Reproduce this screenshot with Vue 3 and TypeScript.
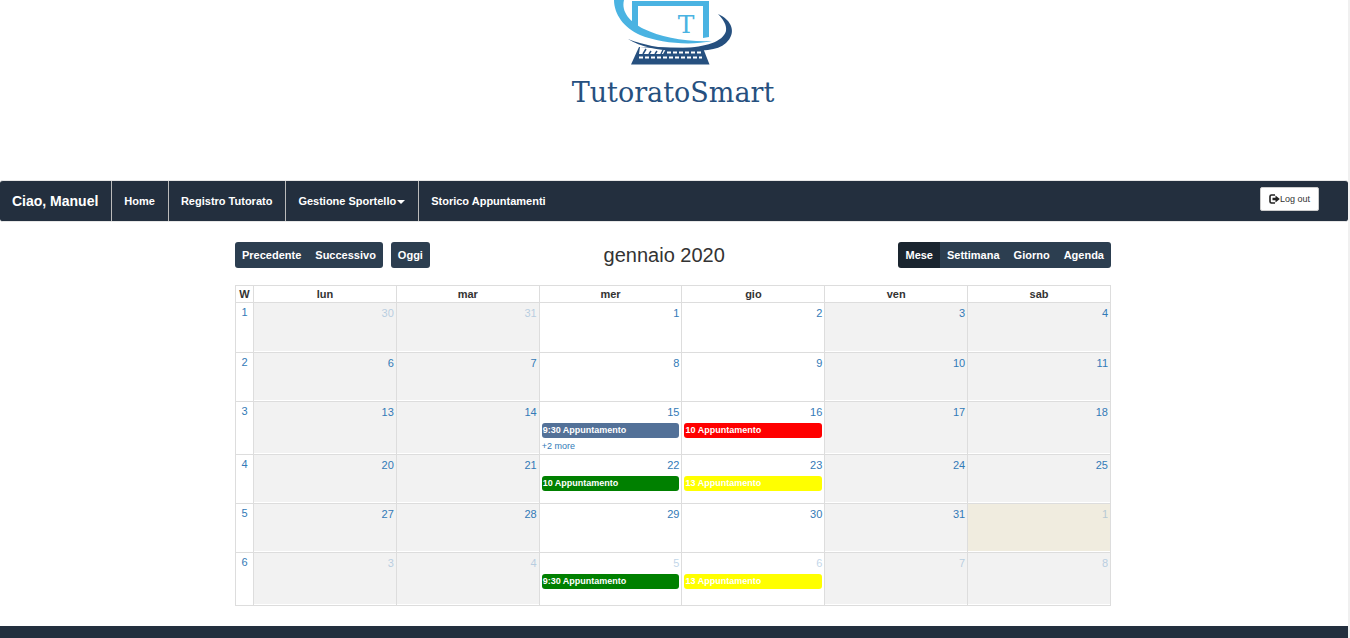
<script setup lang="ts">
import { ref } from 'vue'

interface Appointment {
  time: string
  title: string
  tone: 'slate' | 'red' | 'green' | 'yellow'
}

interface Day {
  label: number
  shaded?: boolean
  other?: boolean
  today?: boolean
  more?: number
  events?: Appointment[]
}

interface Week {
  number: number
  size: 'first' | 'short' | 'tall'
  days: Day[]
}

const weekdays = ['lun', 'mar', 'mer', 'gio', 'ven', 'sab']
const views = ['Mese', 'Settimana', 'Giorno', 'Agenda']
const activeView = ref('Mese')

const appointment = (time: string, tone: Appointment['tone']): Appointment => ({
  time,
  title: 'Appuntamento',
  tone,
})

const bookings: Record<string, Partial<Day>> = {
  '3-15': { events: [appointment('9:30', 'slate')], more: 2 },
  '3-16': { events: [appointment('10', 'red')] },
  '4-22': { events: [appointment('10', 'green')] },
  '4-23': { events: [appointment('13', 'yellow')] },
  '6-5': { events: [appointment('9:30', 'green')] },
  '6-6': { events: [appointment('13', 'yellow')] },
}

const grid = [
  [30, 31, 1, 2, 3, 4],
  [6, 7, 8, 9, 10, 11],
  [13, 14, 15, 16, 17, 18],
  [20, 21, 22, 23, 24, 25],
  [27, 28, 29, 30, 31, 1],
  [3, 4, 5, 6, 7, 8],
]

const sizes: Week['size'][] = ['first', 'short', 'tall', 'short', 'short', 'tall']

const weeks: Week[] = grid.map((labels, row) => ({
  number: row + 1,
  size: sizes[row],
  days: labels.map((label, col) => ({
    label,
    shaded: col !== 2 && col !== 3,
    other: (row === 0 && label > 20) || (row >= 4 && label < 20),
    today: row === 4 && col === 5,
    ...bookings[`${row + 1}-${label}`],
  })),
}))
</script>

<template>
  <div class="page">
    <header class="brand">
      <svg class="logo" viewBox="-1 0 230 120" role="img" aria-label="TutoratoSmart">
        <path d="M72 1H149V37L143 38V6H78V31L72 27Z" fill="#4ab3e2" />
        <path
          d="M54 0C54 14 64 28 80 35C100 43 130 46 152 41C125 42 100 37 84 29C70 22 61 12 64 0Z"
          fill="#4ab3e2"
        />
        <path d="M79 47L71 64.500H149.500L143 48Z" fill="#26507f" />
        <path d="M80 47L79 54H103L106 49Z" fill="#fff" />
        <path d="M83 54L86 49M89 54L91 51M95 54L97 51M101 54L103 50" stroke="#26507f" stroke-width="1.500" />
        <path
          d="M158 14C172 20 177 33 166 43C157 51 142 51 120 51C100 51 80 47 68 39C86 46 105 49 123 48C145 47 163 42 166 31C167 25 163 19 158 14Z"
          fill="#26507f"
        />
        <path d="M107 52.500H141" stroke="#fff" stroke-width="2" stroke-dasharray="4 2" />
        <path d="M79 57.500H142" stroke="#fff" stroke-width="2" stroke-dasharray="4 2" />
        <text x="126" y="33" text-anchor="middle" class="logo-letter">T</text>
        <text x="113" y="102" text-anchor="middle" class="logo-name">TutoratoSmart</text>
      </svg>
    </header>

    <nav class="navbar">
      <a class="user" href="#">Ciao, Manuel</a>
      <a href="#">Home</a>
      <a href="#">Registro Tutorato</a>
      <a href="#">Gestione Sportello<span class="caret"></span></a>
      <a href="#">Storico Appuntamenti</a>
      <button class="logout" type="button">
        <svg viewBox="0 0 11 10" aria-hidden="true">
          <path d="M6 1H2.500Q1 1 1 2.500V7.500Q1 9 2.500 9H6" fill="none" stroke="#222" stroke-width="1.600" />
          <path d="M3.500 3.700H6.500V1.500L10.800 5L6.500 8.500V6.300H3.500Z" fill="#222" />
        </svg>Log out
      </button>
    </nav>

    <main class="calendar">
      <div class="toolbar">
        <div class="side">
          <div class="group">
            <button type="button">Precedente</button>
            <button type="button">Successivo</button>
          </div>
          <div class="group">
            <button type="button">Oggi</button>
          </div>
        </div>
        <h2>gennaio 2020</h2>
        <div class="group">
          <button
            v-for="view in views"
            :key="view"
            type="button"
            :class="{ active: view === activeView }"
            @click="activeView = view"
          >
            {{ view }}
          </button>
        </div>
      </div>

      <table>
        <thead>
          <tr>
            <th class="week">W</th>
            <th v-for="name in weekdays" :key="name">{{ name }}</th>
          </tr>
        </thead>
        <tbody>
          <tr v-for="week in weeks" :key="week.number" :class="week.size">
            <td class="week"><a href="#">{{ week.number }}</a></td>
            <td
              v-for="(day, index) in week.days"
              :key="index"
              :class="{ shaded: day.shaded, other: day.other, today: day.today }"
            >
              <a class="date" href="#">{{ day.label }}</a>
              <a v-for="event in day.events" :key="event.time" class="event" :class="event.tone" href="#">
                {{ event.time }} {{ event.title }}
              </a>
              <a v-if="day.more" class="more" href="#">+{{ day.more }} more</a>
            </td>
          </tr>
        </tbody>
      </table>
    </main>

    <footer></footer>
  </div>
</template>

<style>
body {
  background: #fff;
  overflow: hidden;
}
</style>

<style scoped>
.page {
  box-sizing: border-box;
  min-height: 100vh;
  display: flex;
  flex-direction: column;
  border-right: 2px solid #f0f0f0;
  font-family: 'Liberation Sans', Arial, sans-serif;
  font-size: 11px;
  line-height: 16px;
  color: #333;
}

a {
  color: #337ab7;
  text-decoration: none;
}

button {
  font-family: inherit;
  cursor: pointer;
}

.brand {
  display: flex;
  justify-content: center;
  padding-bottom: 60px;
}

.logo {
  display: block;
  width: 230px;
  height: 120px;
}

.logo-letter {
  font-family: 'DejaVu Serif', serif;
  font-size: 25px;
  fill: #4ab3e2;
}

.logo-name {
  font-family: 'DejaVu Serif', serif;
  font-size: 27px;
  fill: #26507f;
}

.navbar {
  display: flex;
  align-items: stretch;
  height: 40px;
  border: solid #e7e7e7;
  border-width: 1px 0;
  border-radius: 3px;
  background: #232f3e;
}

.navbar a {
  display: flex;
  align-items: center;
  padding: 0 13px 0 12px;
  color: #fff;
  font-weight: bold;
}

.navbar a + a {
  border-left: 1px solid #bbb;
}

.navbar .user {
  font-size: 14px;
}

.caret {
  margin: 2px 0 0 1px;
  border: 4px solid transparent;
  border-top-color: #fff;
  border-bottom: 0;
}

.logout {
  display: flex;
  align-items: center;
  align-self: flex-start;
  height: 24px;
  margin: 6px 29px 0 auto;
  padding: 0 8px;
  border: 1px solid #ccc;
  border-radius: 2px;
  background: #fff;
  color: #333;
  font-size: 9px;
}

.logout svg {
  width: 11px;
  height: 10px;
}

.calendar {
  padding: 20px 237px 20px 235px;
}

.toolbar {
  display: flex;
  align-items: center;
  justify-content: space-between;
  margin-bottom: 17px;
}

.side {
  display: flex;
  gap: 8px;
}

.group {
  display: flex;
  border-radius: 3px;
  overflow: hidden;
}

.group button {
  height: 26px;
  padding: 0 7px;
  border: 0;
  background: #2c3e50;
  color: #fff;
  font-size: 11px;
  font-weight: bold;
}

.group button.active {
  background: #1a252f;
}

h2 {
  margin: 0;
  font-size: 20px;
  line-height: 26px;
  font-weight: normal;
}

table {
  width: 100%;
  table-layout: fixed;
  border-spacing: 0;
  border: solid #ddd;
  border-width: 0 1px 1px 0;
}

th,
td {
  box-sizing: border-box;
  padding: 0;
  border: solid #ddd;
  border-width: 1px 0 0 1px;
}

th {
  height: 17px;
  line-height: 16px;
}

td {
  vertical-align: top;
  padding: 2px 2px 0;
}

.first td {
  height: 50px;
}

.short td {
  height: 49px;
}

.tall td {
  height: 53px;
}

.week {
  width: 18px;
  text-align: center;
}

td.week {
  padding: 1px 0 0;
}

.shaded {
  background: #f2f2f2;
  box-shadow: inset 0 -1px #fff;
}

.today {
  background: #f0ecdf;
}

.date {
  display: block;
  text-align: right;
}

.other .date {
  opacity: 0.3;
}

.event {
  display: block;
  height: 15px;
  margin: 3px 0 0;
  padding-left: 1px;
  border-radius: 3px;
  color: #fff;
  font-size: 9px;
  line-height: 15px;
  font-weight: bold;
}

.slate {
  background: #537198;
}

.red {
  background: #f00;
}

.green {
  background: #008000;
}

.yellow {
  background: #ff0;
}

.more {
  display: block;
  margin: 1px 0 0;
  font-size: 9px;
  line-height: 14px;
}

footer {
  flex: 1;
  background: #232f3e;
}
</style>
